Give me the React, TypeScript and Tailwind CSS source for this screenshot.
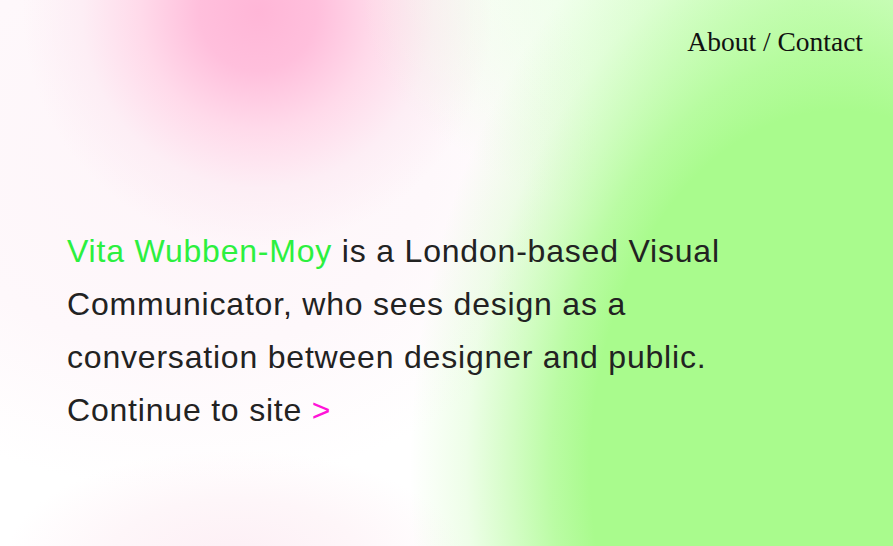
import React from "react";

export default function App() {
  return (
    <div className="flex flex-col w-[893px] h-[546px] overflow-hidden bg-white bg-[radial-gradient(ellipse_430px_620px_at_840px_470px,#a9fb8d_0%,#a9fb8d_58%,rgba(169,251,141,0.8)_67%,rgba(169,251,141,0.52)_76%,rgba(169,251,141,0.2)_87%,rgba(169,251,141,0)_100%),radial-gradient(ellipse_440px_240px_at_800px_0px,rgba(205,255,190,0.7)_0%,rgba(220,255,210,0.45)_50%,rgba(230,255,222,0)_100%),radial-gradient(circle_235px_at_258px_12px,#ffb6d7_0%,#ffbfdc_25%,#ffdaea_50%,#fdeef5_75%,rgba(253,238,245,0)_100%),radial-gradient(ellipse_420px_340px_at_180px_150px,#fef5f9_0%,#fef8fb_60%,rgba(254,248,251,0)_100%),radial-gradient(ellipse_230px_110px_at_235px_560px,#fdeff5_0%,#fef6f9_55%,rgba(254,246,249,0)_100%)]">
      <nav className="flex justify-end pr-[30px] pt-[27px] font-['Liberation_Serif',serif] text-[27.5px] leading-[30px] text-[#111]">
        <span>About / Contact</span>
      </nav>
      <p className="mt-[168px] pl-[67px] font-['Liberation_Sans',Arial,sans-serif] text-[32px] leading-[53px] tracking-[0.8px] text-[#222] whitespace-nowrap">
        <span className="text-[#2cf03f]">Vita Wubben-Moy</span> is a London-based Visual
        <br />
        Communicator, who sees design as a
        <br />
        conversation between designer and public.
        <br />
        Continue to site <span className="text-[#ff14d8]">&gt;</span>
      </p>
    </div>
  );
}
